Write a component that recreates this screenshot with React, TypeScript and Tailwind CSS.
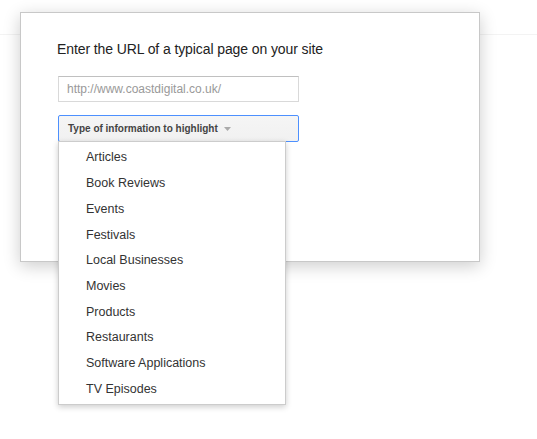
const types = [
  'Articles',
  'Book Reviews',
  'Events',
  'Festivals',
  'Local Businesses',
  'Movies',
  'Products',
  'Restaurants',
  'Software Applications',
  'TV Episodes',
];

export default function App() {
  return (
    <div className="relative h-[439px] w-[537px] overflow-hidden bg-white font-['Liberation_Sans',Arial,sans-serif]">
      {/* page behind the dialog */}
      <div className="h-[35px] border-b border-[#f3f3f3]" />

      {/* dialog */}
      <div className="absolute left-[20px] top-[12px] h-[250px] w-[460px] border border-[#c8c8c8] bg-white px-[37px] pt-[27px] shadow-[0_4px_16px_rgba(0,0,0,0.2)]">
        <h1 className="-ml-[1px] text-[14px] leading-[18px] tracking-[-0.1px] text-[#222]">Enter the URL of a typical page on your site</h1>

        <input
          className="mt-[18px] block h-[26px] w-[241px] border border-[#d9d9d9] border-t-[#c0c0c0] px-[8px] text-[12px] text-[#333] outline-none placeholder:text-[#999]"
          placeholder="http://www.coastdigital.co.uk/"
        />

        <div className="relative mt-[13px] w-[241px]">
          <button className="flex h-[27px] w-full items-center rounded-[2px] border border-solid border-[#4d90fe] bg-gradient-to-b from-[#f5f5f5] to-[#f1f1f1] pl-[9px] text-[10px] font-bold text-[#444]">
            Type of information to highlight
            <svg width="7" height="4" viewBox="0 0 7 4" className="ml-[6px]">
              <path d="M0 0h7L3.5 4z" fill="#aaa" />
            </svg>
          </button>

          {/* open menu */}
          <div className="absolute left-0 top-[26px] z-10 w-[228px] border border-[#ccc] bg-white pb-[2px] pt-[3px] shadow-[0_2px_6px_rgba(0,0,0,0.2)]">
            {types.map((t) => (
              <div key={t} className="flex h-[25.7px] items-center pl-[27px] text-[12.5px] text-[#333]">
                {t}
              </div>
            ))}
          </div>
        </div>
      </div>
    </div>
  );
}
